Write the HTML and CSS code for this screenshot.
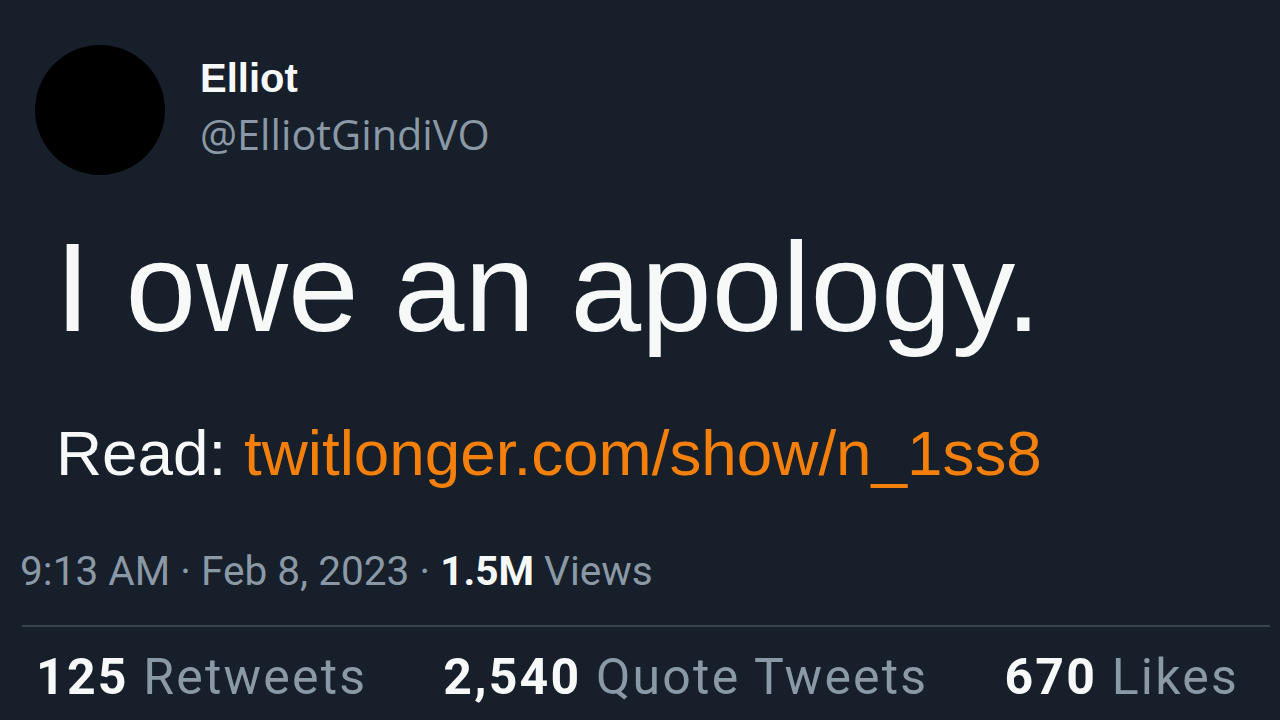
FILE: index.html
```html
<!DOCTYPE html>
<html lang="en">
<head>
<meta charset="utf-8">
<title>Elliot on Twitter</title>
<link rel="stylesheet" href="styles.css">
</head>
<body>
<main class="tweet">
  <header class="author">
    <div class="avatar"></div>
    <div class="names">
      <div class="name">Elliot</div>
      <div class="handle">@ElliotGindiVO</div>
    </div>
  </header>
  <p class="text">I owe an apology.</p>
  <p class="read">Read: <a class="link">twitlonger.com/show/n_1ss8</a></p>
  <div class="meta">9:13 AM · Feb 8, 2023 · <b>1.5M</b> Views</div>
  <hr class="divider">
  <div class="stats">
    <span class="stat"><b>125</b> Retweets</span>
    <span class="stat"><b>2,540</b> Quote Tweets</span>
    <span class="stat"><b>670</b> Likes</span>
  </div>
</main>
</body>
</html>
```

FILE: styles.css
```css
html, body {
  margin: 0;
  padding: 0;
  background: #161f2a;
  width: 1280px;
  height: 720px;
  overflow: hidden;
}
.tweet {
  font-family: "Liberation Sans", Arial, sans-serif;
  color: #f7f9f9;
}
.author {
  display: flex;
  align-items: flex-start;
  gap: 35px;
  padding: 45px 0 0 35px;
}
.avatar {
  width: 130px;
  height: 130px;
  border-radius: 50%;
  background: #000;
  flex: none;
}
.names {
  padding-top: 9px;
}
.name {
  font-size: 40px;
  line-height: 48px;
  font-weight: 700;
}
.handle {
  margin-top: 9px;
  font-family: "Open Sans", "Liberation Sans", sans-serif;
  font-size: 41.4px;
  line-height: 46px;
  color: #8b98a5;
}
.text {
  margin: 37px 0 0 55px;
  font-size: 127px;
  line-height: 150px;
}
.read {
  margin: 54px 0 0 56px;
  font-size: 63.8px;
  line-height: 74px;
}
.link {
  color: #f4800b;
}
.meta {
  margin: 57px 0 0 20px;
  font-family: Roboto, "Liberation Sans", sans-serif;
  font-size: 40.6px;
  line-height: 48px;
  color: #8b98a5;
}
.meta b, .stats b {
  color: #f7f9f9;
  font-weight: 700;
}
.divider {
  margin: 30px 10px 0 22px;
  border: 0;
  height: 2px;
  background: #38444d;
}
.stats {
  display: flex;
  gap: 76px;
  margin: 20px 0 0 36px;
  font-family: Roboto, "Liberation Sans", sans-serif;
  font-size: 50px;
  line-height: 60px;
  letter-spacing: 2.2px;
  color: #8b98a5;
}
```
